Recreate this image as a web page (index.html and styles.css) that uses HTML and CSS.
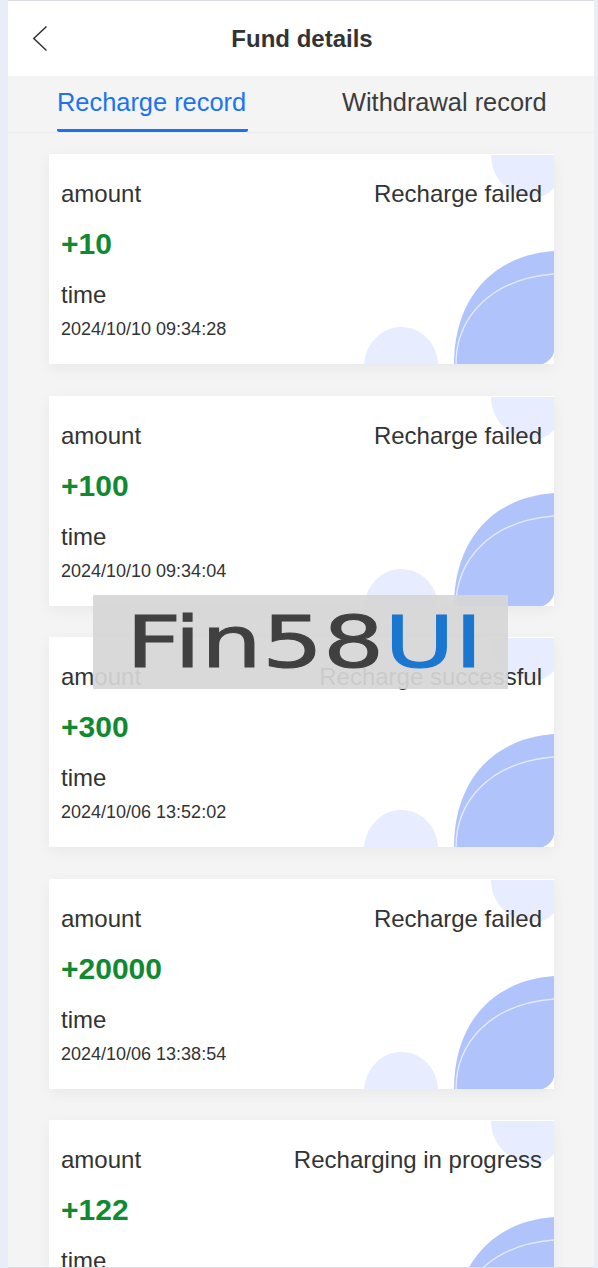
FILE: index.html
```html
<!DOCTYPE html>
<html lang="en">
<head>
<meta charset="utf-8">
<title>Fund details</title>
<link rel="stylesheet" href="styles.css">
</head>
<body>
<div class="page">
  <header class="header">
    <svg class="back" width="18" height="26" viewBox="0 0 18 26"><path d="M14.5 0.5 L1.8 12.5 L14.5 24.5" fill="none" stroke="#333" stroke-width="1.5"/></svg>
    <h1 class="title">Fund details</h1>
  </header>
  <nav class="tabs">
    <div class="tab tab-active">Recharge record</div>
    <div class="tab">Withdrawal record</div>
  </nav>
  <main class="list">
    <article class="card">
      <svg class="deco" viewBox="0 0 505 210" preserveAspectRatio="none"><use href="#bubbles"/></svg>
      <div class="row"><span>amount</span><span>Recharge failed</span></div>
      <div class="value">+10</div>
      <div class="label">time</div>
      <div class="date">2024/10/10 09:34:28</div>
    </article>
    <article class="card">
      <svg class="deco" viewBox="0 0 505 210" preserveAspectRatio="none"><use href="#bubbles"/></svg>
      <div class="row"><span>amount</span><span>Recharge failed</span></div>
      <div class="value">+100</div>
      <div class="label">time</div>
      <div class="date">2024/10/10 09:34:04</div>
    </article>
    <article class="card">
      <svg class="deco" viewBox="0 0 505 210" preserveAspectRatio="none"><use href="#bubbles"/></svg>
      <div class="row"><span>amount</span><span>Recharge successful</span></div>
      <div class="value">+300</div>
      <div class="label">time</div>
      <div class="date">2024/10/06 13:52:02</div>
    </article>
    <article class="card">
      <svg class="deco" viewBox="0 0 505 210" preserveAspectRatio="none"><use href="#bubbles"/></svg>
      <div class="row"><span>amount</span><span>Recharge failed</span></div>
      <div class="value">+20000</div>
      <div class="label">time</div>
      <div class="date">2024/10/06 13:38:54</div>
    </article>
    <article class="card">
      <svg class="deco" viewBox="0 0 505 210" preserveAspectRatio="none"><use href="#bubbles"/></svg>
      <div class="row"><span>amount</span><span>Recharging in progress</span></div>
      <div class="value">+122</div>
      <div class="label">time</div>
      <div class="date">2024/10/06 13:30:12</div>
    </article>
  </main>
  <div class="watermark"><span class="wm-text">Fin58<span class="wm-blue">UI</span></span></div>
</div>
<svg class="defs" width="0" height="0">
  <defs>
    <g id="bubbles">
      <path d="M442 1 H505 V34 Q497 43 486 43 C460 43 442 24 442 1 Z" fill="#e7edfe"/>
      <path d="M315 210 C317 189 333 173 352 173 C372 173 388 189 389 210 Z" fill="#e7edfe"/>
      <path d="M405 210 C405 150 438 102 505 97 V198 Q503 206 494 210 Z" fill="#b0c3fb"/>
      <path d="M407 210 C407 165 440 125 505 120" fill="none" stroke="#e3e9fd" stroke-width="1.4"/>
    </g>
  </defs>
</svg>
</body>
</html>
```
FILE: styles.css
```css
* { box-sizing: border-box; }
html, body { margin: 0; height: 100%; overflow: hidden; }
body {
  background: #e8edf7;
  font-family: "Liberation Sans", Arial, sans-serif;
  color: #333;
}
.page {
  position: relative;
  margin-left: 8px;
  width: 586px;
  height: 1268px;
  background: #f4f4f4;
  border-top: 1px solid #d9dce3;
  border-bottom: 1px solid #d9dce3;
  overflow: hidden;
}
.header {
  position: relative;
  height: 75px;
  padding-left: 2px;
  background: #fff;
  display: flex;
  align-items: center;
  justify-content: center;
}
.back { position: absolute; left: 24px; top: 25px; }
.title { margin: 0; font-size: 24px; font-weight: 700; line-height: 75px; color: #333; }
.tabs {
  height: 57px;
  display: flex;
  padding-left: 49px;
  border-bottom: 1px solid #ececec;
}
.tab {
  font-size: 25.4px;
  line-height: 53px;
  height: 56px;
  color: #3c3c3c;
  white-space: nowrap;
}
.tab-active {
  width: 191px;
  margin-right: 94px;
  color: #1a73f5;
  border-bottom: 3px solid #1a73f5;
  border-radius: 0 0 2px 2px;
}
.list {
  padding: 21px 0 0 41px;
  display: flex;
  flex-direction: column;
  gap: 31.5px;
}
.card {
  position: relative;
  width: 505px;
  height: 210px;
  flex: none;
  background: #fff;
  padding: 26px 12px 0;
  box-shadow: 0 4px 14px rgba(0, 0, 0, 0.05);
}
.deco { position: absolute; left: 0; top: 0; width: 505px; height: 210px; }
.row {
  position: relative;
  display: flex;
  justify-content: space-between;
  font-size: 24px;
  line-height: 28px;
}
.value {
  position: relative;
  margin-top: 19px;
  font-size: 30px;
  line-height: 34px;
  font-weight: 700;
  color: #0f8a33;
}
.label {
  position: relative;
  margin-top: 20px;
  font-size: 24px;
  line-height: 28px;
}
.date {
  position: relative;
  margin-top: 9px;
  font-size: 18px;
  line-height: 22px;
}
.watermark {
  position: absolute;
  left: 85px;
  top: 594px;
  width: 415px;
  height: 94px;
  background: rgba(214, 214, 214, 0.93);
  overflow: hidden;
}
.wm-text {
  position: absolute;
  left: 33px;
  top: 5px;
  font-family: "DejaVu Sans", sans-serif;
  font-size: 72px;
  line-height: 84px;
  color: #404040;
  -webkit-text-stroke: 1px currentColor;
  white-space: nowrap;
  transform: scaleX(1.335);
  transform-origin: left center;
}
.wm-blue { color: #1b76cf; }
.defs { position: absolute; }
```
